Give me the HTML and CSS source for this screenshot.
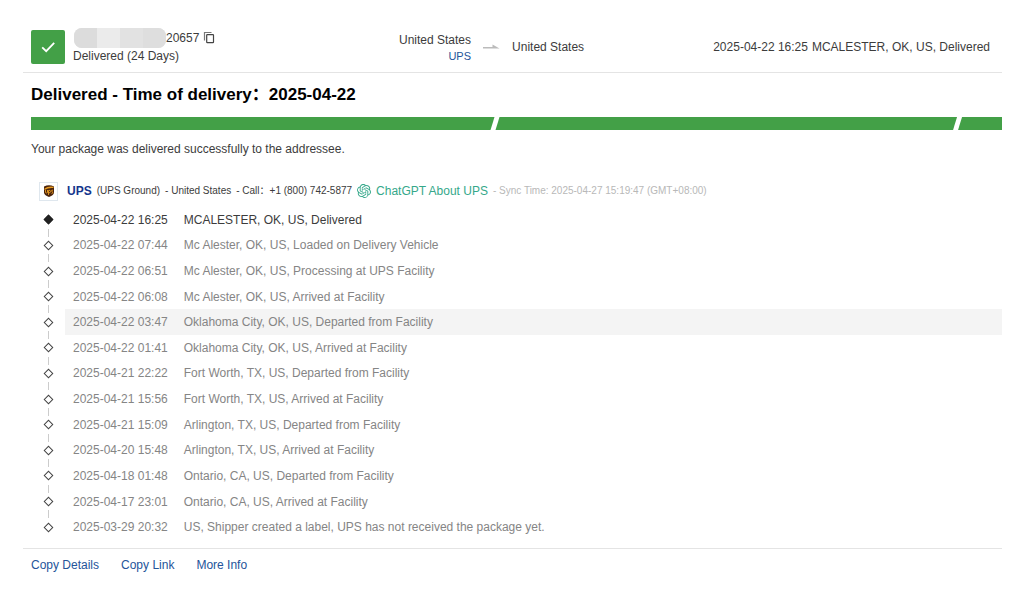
FILE: index.html
```html
<!DOCTYPE html>
<html lang="en">
<head>
<meta charset="utf-8">
<title>Package tracking</title>
<link rel="stylesheet" href="styles.css">
</head>
<body>
<main class="card">
  <header class="summary">
    <div class="status">
      <span class="status-icon">
        <svg viewBox="0 0 34 34" width="34" height="34" aria-hidden="true"><path d="M11.200 17.300l4 3.900 8-8.400" fill="none" stroke="#fff" stroke-width="1.800"/></svg>
      </span>
      <div class="status-text">
        <div class="number">
          <span class="mask"><i></i><i></i><i></i><i></i></span><span>20657</span>
          <button class="copy" type="button" aria-label="Copy number">
            <svg viewBox="0 0 12 13" width="12" height="13" aria-hidden="true"><path d="M1.500 9.500v-8h7" fill="none" stroke="#777" stroke-width="1.200"/><rect x="3.700" y="3.700" width="6.800" height="8" rx=".6" fill="none" stroke="#444" stroke-width="1.200"/></svg>
          </button>
        </div>
        <div>Delivered (24 Days)</div>
      </div>
    </div>
    <div class="route">
      <div class="origin"><div>United States</div><a href="#ups">UPS</a></div>
      <svg class="arrow" viewBox="0 0 17 6" width="17" height="6" aria-hidden="true"><path d="M0 3h9.500V.5L16.500 4.500H0z" fill="#bbb"/></svg>
      <div>United States</div>
    </div>
    <div class="latest"><time>2025-04-22 16:25</time><span>MCALESTER, OK, US, Delivered</span></div>
  </header>

  <section class="details">
    <h1>Delivered - Time of delivery：2025-04-22</h1>
    <div class="progress"><span class="seg first"></span><span class="seg middle"></span><span class="seg last"></span></div>
    <p class="message">Your package was delivered successfully to the addressee.</p>

    <div class="carrier" id="ups">
      <span class="logo">
        <svg viewBox="0 0 12 12" width="12" height="12" aria-hidden="true"><path d="M1 1.500Q6-.8 11 1.500V7.500Q11 10 6 12 1 10 1 7.500z" fill="#4b240c"/><path d="M1.500 3.500Q5 .8 10.500 1.700V3Q5.500 2.400 1.500 5z" fill="#e69a20"/><path d="M2.500 5v2.500q1.200 1 2 0V5M5.500 10V5.500q2-.8 2 1t-2 1.300M10 5.200q-1.700-.3-1.500.7t1.300 1.300-1.300 1.300" fill="none" stroke="#e69a20" stroke-width=".9"/></svg>
      </span>
      <strong>UPS</strong>
      <span>(UPS Ground)</span>
      <span>- United States</span>
      <span>- Call：+1 (800) 742-5877</span>
      <a class="chat" href="#chat">
        <svg viewBox="0 0 24 24" width="14" height="14" aria-hidden="true"><path fill="#35a88a" d="M22.282 9.821a5.985 5.985 0 0 0-.516-4.910 6.046 6.046 0 0 0-6.510-2.900A6.065 6.065 0 0 0 4.981 4.182a5.985 5.985 0 0 0-3.998 2.900 6.046 6.046 0 0 0 .743 7.097 5.980 5.980 0 0 0 .510 4.911 6.051 6.051 0 0 0 6.515 2.900A5.985 5.985 0 0 0 13.260 24a6.056 6.056 0 0 0 5.772-4.206 5.990 5.990 0 0 0 3.998-2.900 6.056 6.056 0 0 0-.748-7.073zM13.260 22.430a4.476 4.476 0 0 1-2.876-1.041l.142-.080 4.778-2.758a.795.795 0 0 0 .393-.681v-6.737l2.020 1.169a.071.071 0 0 1 .038.052v5.583a4.504 4.504 0 0 1-4.495 4.493zM3.600 18.304a4.470 4.470 0 0 1-.535-3.014l.142.085 4.783 2.758a.771.771 0 0 0 .780 0l5.843-3.369v2.332a.080.080 0 0 1-.033.062L9.740 19.950a4.500 4.500 0 0 1-6.140-1.646zM2.341 7.896a4.485 4.485 0 0 1 2.365-1.973v5.677a.766.766 0 0 0 .388.677l5.815 3.354-2.020 1.169a.076.076 0 0 1-.071 0l-4.830-2.787A4.504 4.504 0 0 1 2.341 7.896zm16.596 3.856-5.833-3.388 2.015-1.164a.076.076 0 0 1 .071 0l4.830 2.792a4.494 4.494 0 0 1-.676 8.104v-5.677a.790.790 0 0 0-.407-.667zm2.011-3.024-.142-.085-4.774-2.781a.776.776 0 0 0-.785 0L9.409 9.230V6.897a.066.066 0 0 1 .028-.061l4.830-2.787a4.500 4.500 0 0 1 6.681 4.679zM8.307 12.863l-2.020-1.164a.080.080 0 0 1-.038-.057V6.075a4.500 4.500 0 0 1 7.376-3.453l-.142.080-4.779 2.758a.795.795 0 0 0-.392.681zm1.097-2.365 2.602-1.500 2.607 1.500v2.999l-2.597 1.500-2.607-1.500z"/></svg>
        <span>ChatGPT About UPS</span>
      </a>
      <span class="sync">- Sync Time: 2025-04-27 15:19:47 (GMT+08:00)</span>
    </div>

    <ol class="events">
      <li class="current"><i class="dot"></i><p><time>2025-04-22 16:25</time><span>MCALESTER, OK, US, Delivered</span></p></li>
      <li><i class="dot"></i><p><time>2025-04-22 07:44</time><span>Mc Alester, OK, US, Loaded on Delivery Vehicle</span></p></li>
      <li><i class="dot"></i><p><time>2025-04-22 06:51</time><span>Mc Alester, OK, US, Processing at UPS Facility</span></p></li>
      <li><i class="dot"></i><p><time>2025-04-22 06:08</time><span>Mc Alester, OK, US, Arrived at Facility</span></p></li>
      <li class="hovered"><i class="dot"></i><p><time>2025-04-22 03:47</time><span>Oklahoma City, OK, US, Departed from Facility</span></p></li>
      <li><i class="dot"></i><p><time>2025-04-22 01:41</time><span>Oklahoma City, OK, US, Arrived at Facility</span></p></li>
      <li><i class="dot"></i><p><time>2025-04-21 22:22</time><span>Fort Worth, TX, US, Departed from Facility</span></p></li>
      <li><i class="dot"></i><p><time>2025-04-21 15:56</time><span>Fort Worth, TX, US, Arrived at Facility</span></p></li>
      <li><i class="dot"></i><p><time>2025-04-21 15:09</time><span>Arlington, TX, US, Departed from Facility</span></p></li>
      <li><i class="dot"></i><p><time>2025-04-20 15:48</time><span>Arlington, TX, US, Arrived at Facility</span></p></li>
      <li><i class="dot"></i><p><time>2025-04-18 01:48</time><span>Ontario, CA, US, Departed from Facility</span></p></li>
      <li><i class="dot"></i><p><time>2025-04-17 23:01</time><span>Ontario, CA, US, Arrived at Facility</span></p></li>
      <li><i class="dot"></i><p><time>2025-03-29 20:32</time><span>US, Shipper created a label, UPS has not received the package yet.</span></p></li>
    </ol>
  </section>

  <footer class="actions">
    <button type="button">Copy Details</button>
    <button type="button">Copy Link</button>
    <button type="button">More Info</button>
  </footer>
</main>
</body>
</html>
```
FILE: styles.css
```css
*, *::before, *::after { box-sizing: border-box; }
body {
  margin: 0;
  background: #fff;
  color: #3c3c3c;
  font: 12px/18px "Liberation Sans", Arial, "Noto Sans CJK SC", sans-serif;
}
a { color: #24549a; text-decoration: none; }
button { border: 0; padding: 0; background: none; font: inherit; cursor: pointer; }
.card { padding: 21px 22px 0 23px; }

.summary {
  display: grid;
  grid-template-columns: 377fr auto 419fr;
  align-items: center;
  height: 52px;
  border-bottom: 1px solid #e4e4e4;
}
.status { display: flex; align-items: center; gap: 8px; padding-left: 8px; }
.status-icon { width: 34px; height: 34px; border-radius: 2px; background: #43a047; }
.status-icon svg { display: block; }
.status-text { padding-bottom: 2px; line-height: 16px; }
.number { display: flex; align-items: center; }
.mask { display: flex; width: 92px; height: 20px; margin-left: 1px; border-radius: 8px; overflow: hidden; background: #e2e2e2; }
.mask i { flex: 1; }
.mask i:nth-child(1) { background: #dcdcdc; }
.mask i:nth-child(2) { background: #ebebeb; }
.mask i:nth-child(4) { background: #dedede; }
.copy { display: flex; margin-left: 4px; }

.route { display: flex; align-items: center; gap: 12px; }
.origin { padding-top: 2px; text-align: right; line-height: 16px; }
.origin a { display: block; font-size: 11px; }
.latest { display: flex; justify-content: flex-end; gap: 4px; padding-right: 12px; }

.details { padding-left: 8px; }
h1 { margin: 0; padding: 10px 0; color: #000; font-size: 17px; line-height: 24px; }
.progress { display: flex; height: 13px; }
.seg { background: #43a047; }
.first { flex: 464; clip-path: polygon(0 0, 100% 0, calc(100% - 4px) 100%, 0 100%); }
.middle { flex: 463; clip-path: polygon(5px 0, 100% 0, calc(100% - 4px) 100%, 1px 100%); }
.last { flex: 45; clip-path: polygon(5px 0, 100% 0, 100% 100%, 1px 100%); }
.message { margin: 0; padding: 10px 0 22px; }

.carrier { display: flex; align-items: center; gap: 5px; height: 22px; padding-left: 8px; font-size: 10px; }
.logo { display: grid; place-items: center; width: 19px; height: 19px; margin-right: 4px; border: 1px solid #dfe7ee; }
.carrier strong { color: #14358c; font-size: 12px; }
.chat { display: flex; align-items: center; gap: 5px; color: #35a88a; font-size: 12px; }
.sync { color: #b8b8b8; }

.events {
  display: grid;
  grid-auto-rows: 1fr;
  min-height: 333px;
  margin: 0;
  padding: 5px 0 8px 8px;
  list-style: none;
  color: #858585;
  box-sizing: content-box;
}
.events li { display: grid; grid-template-columns: 26px 1fr; align-items: stretch; }
.dot { position: relative; width: 19px; display: grid; place-items: center; }
.dot::before { content: ""; width: 7px; height: 7px; border: 1px solid #444; transform: rotate(45deg); background: #fff; }
.current .dot::before { background: #222; border-color: #222; }
.events li:not(:last-child) .dot::after { content: ""; position: absolute; left: 9px; bottom: -4px; width: 1px; height: 8px; background: #ccc; }
.events p { display: flex; align-items: center; gap: 16px; margin: 0; padding-left: 8px; }
.current p { color: #3c3c3c; }
.hovered p { background: #f4f4f4; }

.actions { display: flex; gap: 22px; padding: 7px 8px; border-top: 1px solid #e4e4e4; }
.actions button { color: #24549a; }
```
